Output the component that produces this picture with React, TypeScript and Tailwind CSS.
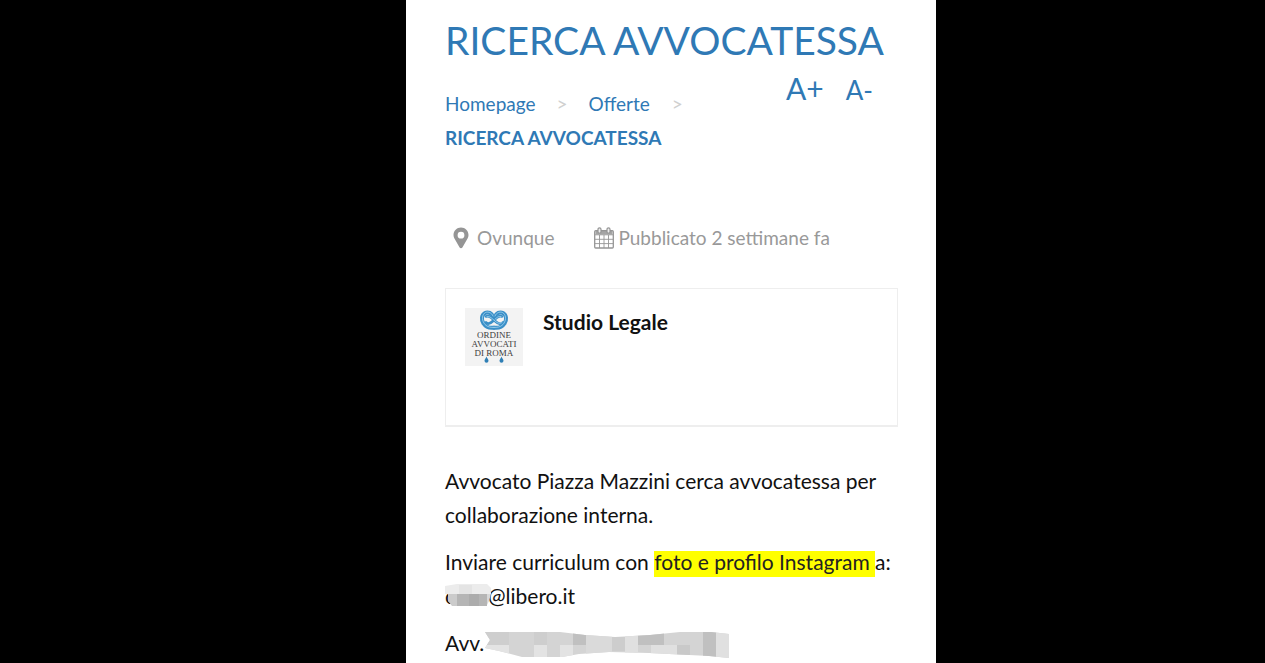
import React from "react";

function PinIcon() {
  return (
    <svg viewBox="0 0 16 22" className="h-[22px] w-4 shrink-0" fill="#959595" aria-hidden="true">
      <path
        fillRule="evenodd"
        d="M8 0.500C3.800 0.500 0.500 3.800 0.500 8c0 1.300.300 2.300.800 3.300l5.300 9.200c.600 1.100 2.200 1.100 2.800 0l5.300-9.200c.500-1 .800-2 .800-3.300C15.500 3.800 12.200.500 8 .500Zm0 4.300a3.400 3.400 0 1 1 0 6.800 3.400 3.400 0 0 1 0-6.800Z"
      />
    </svg>
  );
}

function CalendarIcon() {
  return (
    <svg viewBox="0 0 20 22" className="h-[22px] w-5 shrink-0" fill="none" stroke="#959595" aria-hidden="true">
      <path d="M1.500 4h17v3.500h-17z" fill="#a5a5a5" stroke="none" />
      <rect x="0.700" y="3.700" width="18.600" height="17.300" rx="1" strokeWidth="1.300" />
      <path d="M5.500 8v13M10 8v13M14.500 8v13M1 7.800h18M1 12.300h18M1 16.600h18" strokeWidth="0.900" />
      <rect x="4" y="0.800" width="3" height="5.400" rx="1.500" fill="#eee" strokeWidth="1.200" />
      <rect x="13" y="0.800" width="3" height="5.400" rx="1.500" fill="#eee" strokeWidth="1.200" />
    </svg>
  );
}

function OrdineLogo() {
  return (
    <svg viewBox="0 0 58 58" className="size-[58px] shrink-0" role="img" aria-label="Ordine Avvocati di Roma">
      <rect width="58" height="58" fill="#f3f3f3" />
      <g fill="none" strokeLinecap="round">
        <g stroke="#3a8fc7" strokeWidth="4">
          <path d="M28 9C27 5 23 3.500 20 5c-3.500 2-4 7-1.500 10.500 2.500 3.800 7 4.700 10.500 4.200" />
          <path d="M30 9c1-4 5-5.500 8-4 3.500 2 4 7 1.500 10.500-2.500 3.800-7 4.700-10.500 4.200" />
          <path d="M21 8.500c3-1.500 6 1.500 9 4.500s6 3.500 8 1.500" strokeWidth="2.600" />
          <path d="M37 8.500c-3-1.500-6 1.500-9 4.500s-5 3.500-7 1.500" strokeWidth="2.600" />
        </g>
        <g stroke="#a3d5f3" strokeWidth="0.800">
          <path d="M28 8C26.500 4 22 3 19.500 5.200 16.500 8 17 13 20 16.500c2.500 2.700 6 3 9 2.900" />
          <path d="M30 8c1.500-4 6-5 8.500-2.800C41.500 8 41 13 38 16.500c-2.500 2.700-6 3-9 2.900" />
          <path d="M22 8.500c3-.500 5 2 8 4.500s5 3 7 1.500" />
          <path d="M36 8.500c-3-.500-4 1-6 2.800" />
        </g>
      </g>
      <g fill="#3c3c3c" fontFamily="'Liberation Serif', serif" fontSize="9" textAnchor="middle">
        <text x="29" y="30">ORDINE</text>
        <text x="29" y="39">AVVOCATI</text>
        <text x="29" y="48">DI ROMA</text>
      </g>
      <path
        d="M21.500 48.500c.500 2 2 2.800 2 4.200a2 2 0 0 1-4 0c0-1.400 1.500-2.200 2-4.200ZM36.500 48.500c.500 2 2 2.800 2 4.200a2 2 0 0 1-4 0c0-1.400 1.500-2.200 2-4.200Z"
        fill="#2f7fb5"
      />
    </svg>
  );
}

function MailMask() {
  return (
    <svg viewBox="0 0 46 24" className="absolute top-[5px] left-0 h-6 w-[46px]" aria-hidden="true">
      <path d="M0 2 12 0h30l4 4v6H0z" fill="#ececec" />
      <path d="M14 1h13v9H14z" fill="#e4e4e4" />
      <path d="M3 10h9v12H7l-4-5z" fill="#cbcbcb" />
      <path d="M12 10h30v12H12z" fill="#b5b5b5" />
      <path d="M24 10h10v12H24z" fill="#acacac" />
      <path d="M42 10h4l-2 7-2 4z" fill="#d8d8d8" />
    </svg>
  );
}

function NameMask() {
  return (
    <svg viewBox="0 0 245 28" className="mt-1 h-7 w-[245px]" aria-hidden="true">
      <defs>
        <clipPath id="stroke-shape">
          <path d="M1 1h75l25 3 30 2 35-2 30-3h31l18 2v24l-20-2-60-3-40-1-30 2-17 3H38L15 20 1 17l5-8z" />
        </clipPath>
      </defs>
      <g clipPath="url(#stroke-shape)">
        <path d="M0 0h245v28H0z" fill="#d4d4d4" />
        <path d="M0 0h25v14H0zM50 0h13v14H50z" fill="#cecece" />
        <path d="M0 14h25v14H0zM50 14h13v14H50zM76 14h13v14H76z" fill="#e3e3e3" />
        <path d="M89 0h13v14H89zM154 0h26v14h-26zM219 0h13v28h-13z" fill="#c0c0c0" />
        <path d="M102 0h26v28h-26z" fill="#dadada" />
        <path d="M128 6h13v14h-13z" fill="#cdcdcd" />
        <path d="M141 0h13v28h-13zM167 14h26v14h-26zM232 0h13v28h-13z" fill="#e0e0e0" />
        <path d="M193 14h13v14h-13z" fill="#c9c9c9" />
      </g>
    </svg>
  );
}

export default function App() {
  return (
    <div className="grid min-h-screen grid-cols-[406fr_minmax(0,530px)_329fr] bg-black font-['Lato',sans-serif]">
      <main className="col-start-2 bg-white pt-4 pr-[38px] pl-[39px] text-[21px] leading-[34px] text-[#111]">
        <h1 className="text-[39px] leading-[48px] text-[#2f79b5]">RICERCA AVVOCATESSA</h1>

        <div className="mt-[6px] flex items-start justify-between text-[#2f79b5]">
          <nav aria-label="Breadcrumb" className="pt-[17px] text-[19px]">
            <ol>
              <li className="inline">
                <a href="#home">Homepage</a>
                <span className="mx-[21px] text-[#d0d0d0]">&gt;</span>
              </li>
              <li className="inline">
                <a href="#offerte">Offerte</a>
                <span className="ml-[22px] text-[#d0d0d0]">&gt;</span>
              </li>
              <li className="font-bold" aria-current="page">RICERCA AVVOCATESSA</li>
            </ol>
          </nav>
          <div className="flex items-baseline gap-[22px] pr-[25px] leading-9">
            <button type="button" className="text-[30px]">A+</button>
            <button type="button" className="text-[26px]">A-</button>
          </div>
        </div>

        <ul className="mt-[66px] flex items-center pl-2 text-[19px] text-[#999]">
          <li className="flex items-center gap-2">
            <PinIcon />
            Ovunque
          </li>
          <li className="ml-10 flex items-center gap-1">
            <CalendarIcon />
            Pubblicato 2 settimane fa
          </li>
        </ul>

        <section className="mt-[33px] flex min-h-[139px] items-start gap-5 border border-b-2 border-[#eeeeee] p-[19px]">
          <OrdineLogo />
          <h2 className="-mt-[3px] font-bold">Studio Legale</h2>
        </section>

        <div className="mt-[37px] flex flex-col gap-[13px]">
          <p>Avvocato Piazza Mazzini cerca avvocatessa per collaborazione interna.</p>
          <p>
            Inviare curriculum con{" "}
            <mark className="bg-transparent bg-[linear-gradient(transparent_2px,#ffff00_2px)] pb-[3px] text-[#222]">
              foto e profilo Instagram{" "}
            </mark>
            a:
            <br />
            <span className="relative inline-block w-[43px]">
              c<MailMask />
            </span>
            @libero.it
          </p>
          <p className="flex items-center">
            Avv.
            <NameMask />
          </p>
        </div>
      </main>
    </div>
  );
}
